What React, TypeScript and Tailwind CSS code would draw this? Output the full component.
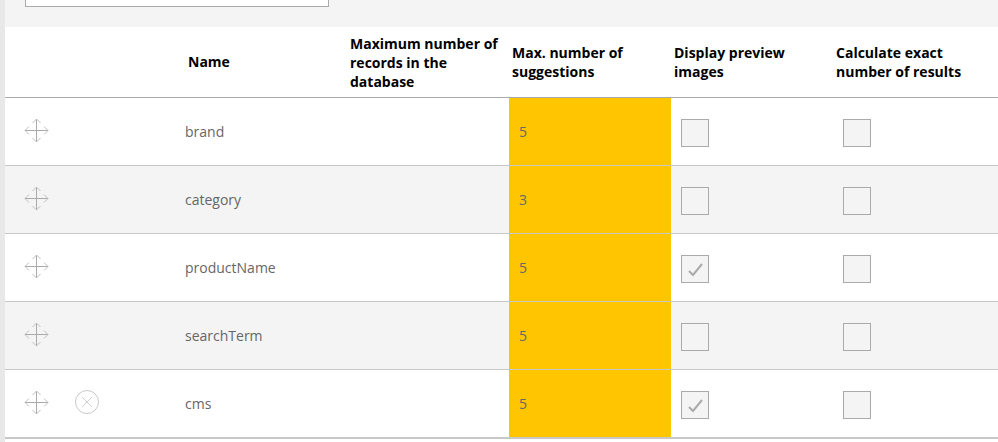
import React from "react";

const rows = [
  { name: "brand", max: 5, preview: false, removable: false },
  { name: "category", max: 3, preview: false, removable: false },
  { name: "productName", max: 5, preview: true, removable: false },
  { name: "searchTerm", max: 5, preview: false, removable: false },
  { name: "cms", max: 5, preview: true, removable: true },
];

function MoveIcon() {
  return (
    <svg width="25" height="25" viewBox="0 0 25 25" fill="none" strokeWidth="1">
      <path d="M12.5 1v23M1 12.5h23" stroke="#aaaaaa" />
      <path d="M8.5 5l4-4 4 4M8.5 20l4 4 4-4M5 8.5l-4 4 4 4M20 8.5l4 4-4 4" stroke="#c0c0c0" />
    </svg>
  );
}

function RemoveIcon() {
  return (
    <svg width="24" height="24" viewBox="0 0 24 24" fill="none" strokeWidth="1">
      <circle cx="12" cy="12" r="11.5" stroke="#c8c8c8" />
      <path d="M7 7l10 10M17 7L7 17" stroke="#d0d0d0" />
    </svg>
  );
}

function Checkbox({ checked }: { checked: boolean }) {
  return (
    <div className="flex h-[28px] w-[28px] items-center justify-center border border-[#aaaaaa] bg-[#f4f4f4]">
      {checked && (
        <svg width="18" height="16" viewBox="0 0 18 16" fill="none" stroke="#aaaaaa" strokeWidth="2">
          <path d="M3 10l4 4 9-11" />
        </svg>
      )}
    </div>
  );
}

export default function App() {
  return (
    <div className="h-[442px] w-[998px] overflow-hidden border-l-[5px] border-[#e8e8e8] bg-white font-['Open_Sans',sans-serif] text-[14px] leading-[19px]">
      <div className="h-[27px] bg-[#f4f4f4] pl-[20px]">
        <div className="h-[7px] w-[304px] border border-t-0 border-[#aaaaaa] bg-white" />
      </div>
      <div className="grid h-[71px] grid-cols-[177px_165px_162px_162px_162px_165px] items-center border-b border-[#aaaaaa] font-bold text-black">
        <div />
        <div className="pb-[2px] pl-[6px]">Name</div>
        <div className="pl-[3px]">Maximum number of records in the database</div>
        <div className="pl-[3px] pr-[20px]">Max. number of suggestions</div>
        <div className="pl-[3px] pr-[20px]">Display preview images</div>
        <div className="pl-[3px] pr-[20px]">Calculate exact number of results</div>
      </div>
      {rows.map((row, i) => (
        <div
          key={row.name}
          className={`grid grid-cols-[177px_165px_162px_162px_162px_165px] border-[#c8c8c8] text-[#666666] ${
            i % 2 === 1 ? "bg-[#f4f4f4]" : "bg-white"
          } ${i === rows.length - 1 ? "h-[69px] border-b-2" : "h-[68px] border-b"}`}
        >
          <div className="flex items-center gap-[26px] pb-[3px] pl-[19px]">
            <MoveIcon />
            {row.removable && <RemoveIcon />}
          </div>
          <div className="flex items-center pl-[3px]">{row.name}</div>
          <div />
          <div className="flex items-center bg-[#ffc600] pl-[10px]">{row.max}</div>
          <div className="flex items-center pl-[10px] pt-[3px]">
            <Checkbox checked={row.preview} />
          </div>
          <div className="flex items-center pl-[10px] pt-[3px]">
            <Checkbox checked={false} />
          </div>
        </div>
      ))}
    </div>
  );
}
